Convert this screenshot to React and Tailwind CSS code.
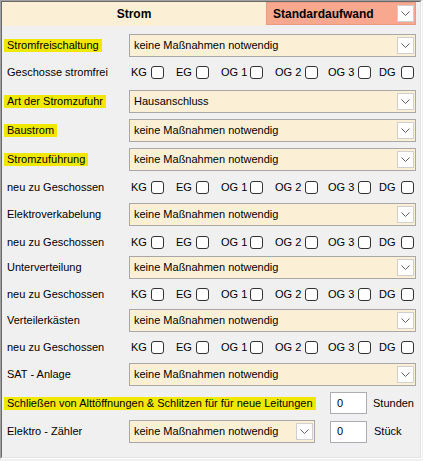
import React from "react";

function Chevron() {
  return (
    <svg width="9" height="5" viewBox="0 0 9 5">
      <path d="M0.5 0.5 L4.5 4.5 L8.5 0.5" fill="none" stroke="#606060" strokeWidth="1" />
    </svg>
  );
}

function DropBtn() {
  return (
    <div className="w-[17px] h-[17px] bg-white border border-[#cfcfcf] flex items-center justify-center mr-[1px] shrink-0">
      <Chevron />
    </div>
  );
}

function Select({ value, width }) {
  return (
    <div className={"h-[23px] bg-[#fbf0d5] border border-[#a8a8a8] flex items-center " + width}>
      <span className="flex-1 pl-[4px] whitespace-nowrap overflow-hidden">{value}</span>
      <DropBtn />
    </div>
  );
}

function Label({ text, hl }) {
  return (
    <div className="w-[127px] shrink-0 pl-[2px] overflow-hidden whitespace-nowrap">
      <span className={"inline-block px-[3px] leading-[13px] " + (hl ? "bg-[#f0e800]" : "")}>{text}</span>
    </div>
  );
}

function SelectRow({ label, hl, value = "keine Maßnahmen notwendig", mt }) {
  return (
    <div className={"flex items-center h-[23px] " + mt}>
      <Label text={label} hl={hl} />
      <Select value={value} width="w-[287px]" />
    </div>
  );
}

function Box() {
  return <div className="w-[13px] h-[13px] bg-white border border-[#333333] rounded-[3px] shrink-0" />;
}

function CheckRow({ label, mt }) {
  return (
    <div className={"flex items-center h-[18px] " + mt}>
      <Label text={label} />
      <div className="pl-[2px] flex items-center">
        <div className="w-[45px] flex items-center">
          <span className="w-[20px]">KG</span>
          <Box />
        </div>
        <div className="w-[45px] flex items-center">
          <span className="w-[20px]">EG</span>
          <Box />
        </div>
        <div className="w-[54px] flex items-center">
          <span className="w-[29px]">OG 1</span>
          <Box />
        </div>
        <div className="w-[53px] flex items-center">
          <span className="w-[30px]">OG 2</span>
          <Box />
        </div>
        <div className="w-[51px] flex items-center">
          <span className="w-[30px]">OG 3</span>
          <Box />
        </div>
        <div className="w-[35px] flex items-center">
          <span className="w-[22px]">DG</span>
          <Box />
        </div>
      </div>
    </div>
  );
}

function NumInput() {
  return (
    <div className="w-[37px] h-[22px] bg-white border border-[#abadb3] flex items-center pl-[6px] shrink-0">0</div>
  );
}

export default function App() {
  return (
    <div className="w-[423px] h-[461px] bg-[#f0f0f0] font-['Liberation_Sans',Arial,sans-serif] text-[11px] text-black">
      <div className="w-[422px] h-[459px] border-l border-t border-[#a0a0a0] border-r border-r-white border-b border-b-white">
        <div className="w-full h-full border-l border-t border-[#696969] border-r border-r-[#e3e3e3] border-b border-b-[#e3e3e3] flex flex-col">
          {/* header */}
          <div className="flex items-start h-[24px]">
            <div className="w-[264px] h-[24px] bg-[#fbf0d5] flex items-center justify-center font-bold text-[12px]">Strom</div>
            <div className="w-[150px] h-[23px] bg-[#f7a88e] border border-[#e89c84] flex items-center">
              <span className="flex-1 pl-[6px] font-bold text-[12px]">Standardaufwand</span>
              <DropBtn />
            </div>
          </div>

          <SelectRow label="Stromfreischaltung" hl mt="mt-[8px]" />
          <CheckRow label="Geschosse stromfrei" mt="mt-[6px]" />
          <SelectRow label="Art der Stromzufuhr" hl value="Hausanschluss" mt="mt-[9px]" />
          <SelectRow label="Baustrom" hl mt="mt-[6px]" />
          <SelectRow label="Stromzuführung" hl mt="mt-[6px]" />
          <CheckRow label="neu zu Geschossen" mt="mt-[7px]" />
          <SelectRow label="Elektroverkabelung" mt="mt-[7px]" />
          <CheckRow label="neu zu Geschossen" mt="mt-[7px]" />
          <SelectRow label="Unterverteilung" mt="mt-[5px]" />
          <CheckRow label="neu zu Geschossen" mt="mt-[6px]" />
          <SelectRow label="Verteilerkästen" mt="mt-[6px]" />
          <CheckRow label="neu zu Geschossen" mt="mt-[6px]" />
          <SelectRow label="SAT - Anlage" mt="mt-[7px]" />

          <div className="flex items-center h-[22px] mt-[6px]">
            <div className="w-[328px] shrink-0 pl-[2px] whitespace-nowrap">
              <span className="inline-block px-[3px] leading-[13px] bg-[#f0e800]">
                Schließen von Alttöffnungen &amp; Schlitzen für für neue Leitungen
              </span>
            </div>
            <NumInput />
            <span className="ml-[6px]">Stunden</span>
          </div>

          <div className="flex items-center h-[23px] mt-[6px]">
            <Label text="Elektro - Zähler" />
            <Select value="keine Maßnahmen notwendig" width="w-[186px]" />
            <div className="ml-[15px]">
              <NumInput />
            </div>
            <span className="ml-[7px]">Stück</span>
          </div>
        </div>
      </div>
    </div>
  );
}
